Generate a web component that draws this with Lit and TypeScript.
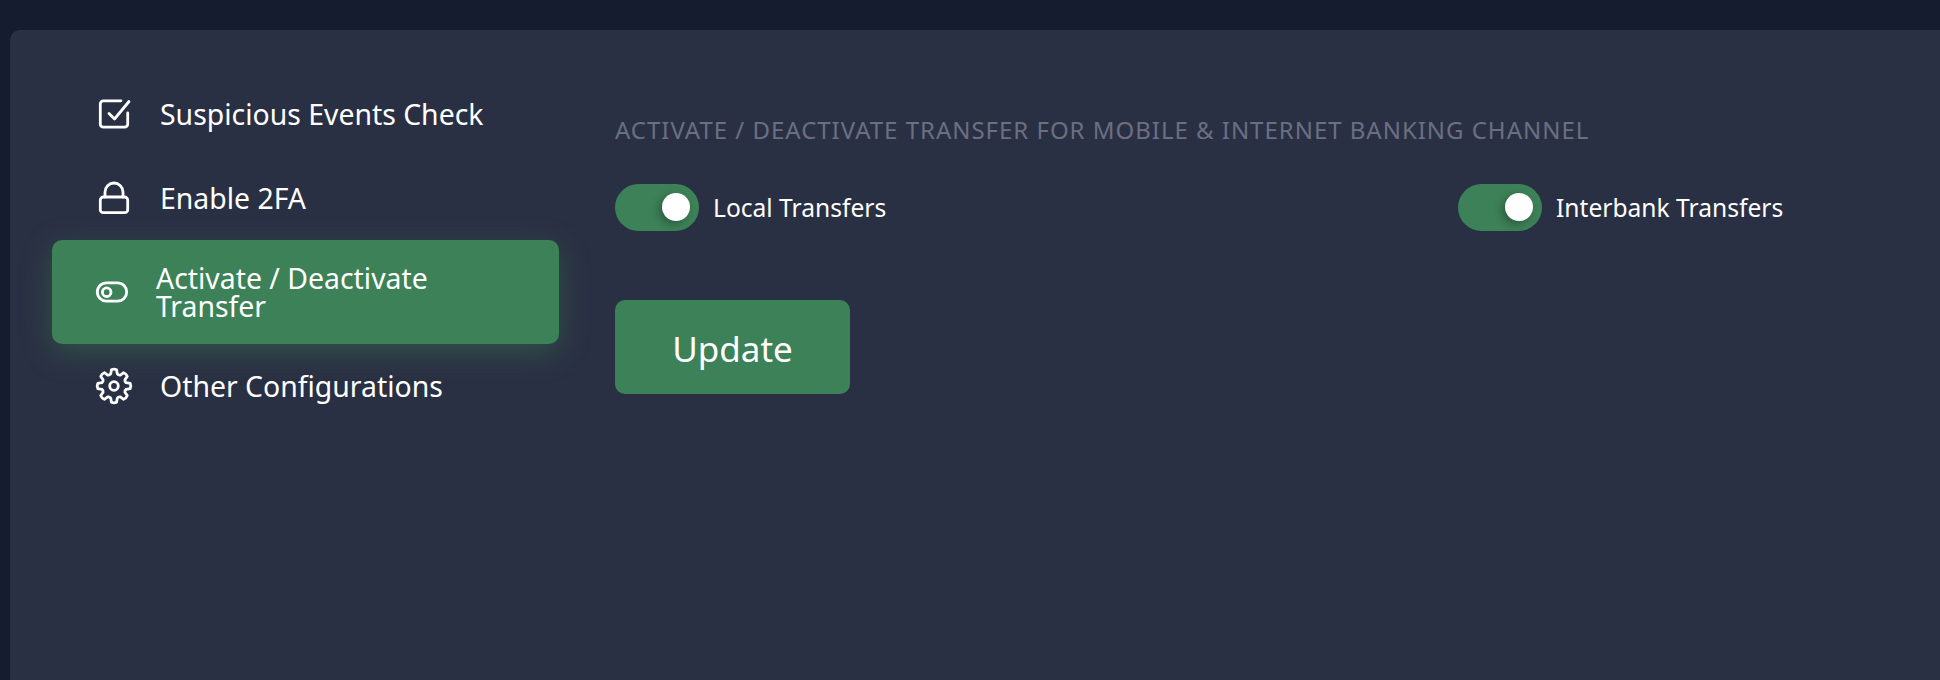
import { LitElement, html, css, svg } from "lit";
import { customElement } from "lit/decorators.js";

const gearPath = (() => {
  const pt = (deg: number, r: number) => {
    const a = (deg * Math.PI) / 180;
    return `${(20 + r * Math.cos(a)).toFixed(2)} ${(20 + r * Math.sin(a)).toFixed(2)}`;
  };
  let d = "";
  for (let i = 0; i < 8; i++) {
    const c = i * 45 - 90;
    d += `${i === 0 ? "M" : "L"}${pt(c - 9, 16.4)} Q${pt(c, 17.4)} ${pt(c + 9, 16.4)} L${pt(c + 15, 12.6)} Q${pt(c + 22.5, 11.4)} ${pt(c + 30, 12.6)} `;
  }
  return d + "Z";
})();

const icons = {
  check: svg`<path d="M15 19.500 20.500 25 35 7.500"/><path d="M27 6.800H9.300a3 3 0 0 0-3 3v20.400a3 3 0 0 0 3 3h21.400a3 3 0 0 0 3-3V19"/>`,
  lock: svg`<rect x="6.300" y="19" width="27.400" height="15.700" rx="3"/><path d="M11 19v-5a9 9 0 0 1 18 0v5"/>`,
  toggle: svg`<rect x="3.300" y="10.800" width="29.400" height="18.400" rx="9.200"/><circle cx="12.700" cy="20.200" r="4.300"/>`,
  gear: svg`<path d=${gearPath}/><circle cx="20" cy="20" r="4.300"/>`,
};

@customElement("app-root")
export class AppRoot extends LitElement {
  static styles = css`
    :host {
      display: block;
      width: 1940px;
      height: 680px;
      overflow: hidden;
      background: #161c30;
      font-family: "Noto Sans", sans-serif;
      color: #fff;
    }
    .card {
      box-sizing: border-box;
      width: 1950px;
      height: 680px;
      margin: 30px 0 0 10px;
      padding: 42px 42px;
      border-radius: 10px 0 0 0;
      background: #2a3043;
      display: grid;
      grid-template-columns: 507px 1fr;
      gap: 56px;
    }
    .nav { display: flex; flex-direction: column; }
    .item {
      display: flex;
      align-items: center;
      min-height: 84px;
      padding: 0 50px 0 42px;
      gap: 26px;
      font-size: 28.4px;
      line-height: 28px;
    }
    .item svg { flex: none; width: 40px; height: 40px; fill: none; stroke: #fff; stroke-width: 2.800; stroke-linecap: round; stroke-linejoin: round; }
    .item.active {
      min-height: 104px;
      background: #3d8158;
      border-radius: 10px;
      box-shadow: 0 8px 30px rgba(62, 130, 89, 0.42);
      gap: 22px;
    }
    .main { padding-top: 44px; }
    .title { font-size: 24px; line-height: 28px; letter-spacing: 0.98px; color: #6a6f82; text-transform: uppercase; white-space: nowrap; }
    .switches { display: grid; grid-template-columns: 843px 1fr; margin-top: 40px; }
    .switch { display: flex; align-items: center; gap: 14px; font-size: 24.6px; line-height: 45px; }
    .track { width: 84px; height: 47px; border-radius: 24px; background: #3d8158; position: relative; flex: none; }
    .knob { position: absolute; top: 9px; right: 9px; width: 28px; height: 28px; border-radius: 50%; background: #fff; box-shadow: -3px 3px 8px rgba(0, 0, 0, 0.3); }
    .btn { display: block; margin-top: 69px; padding: 3px 0 0; width: 235px; height: 94px; border: 0; border-radius: 10px; background: #3d8158; color: #fff; font: 35px "Noto Sans", sans-serif; }
  `;

  private row(icon: keyof typeof icons, label: string, active = false) {
    return html`<div class="item ${active ? "active" : ""}">
      <svg viewBox="0 0 40 40">${icons[icon]}</svg><span>${label}</span>
    </div>`;
  }

  render() {
    return html`<div class="card">
      <nav class="nav">
        ${this.row("check", "Suspicious Events Check")}
        ${this.row("lock", "Enable 2FA")}
        ${this.row("toggle", "Activate / Deactivate Transfer", true)}
        ${this.row("gear", "Other Configurations")}
      </nav>
      <section class="main">
        <div class="title">Activate / Deactivate Transfer for Mobile &amp; Internet Banking Channel</div>
        <div class="switches">
          <label class="switch"><span class="track"><span class="knob"></span></span><span class="text">Local Transfers</span></label>
          <label class="switch"><span class="track"><span class="knob"></span></span><span class="text">Interbank Transfers</span></label>
        </div>
        <button class="btn">Update</button>
      </section>
    </div>`;
  }
}
